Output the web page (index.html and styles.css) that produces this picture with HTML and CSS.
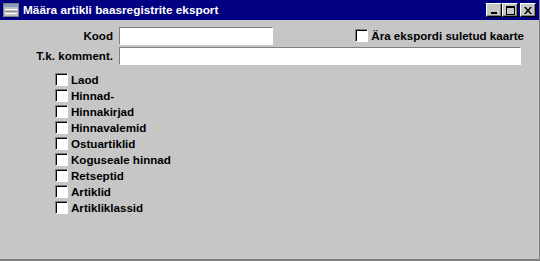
FILE: index.html
```html
<!DOCTYPE html>
<html>
<head>
<meta charset="utf-8">
<link rel="stylesheet" href="styles.css">
</head>
<body>
<div class="window">
  <div class="titlebar">
    <svg class="appicon" width="16" height="14" viewBox="0 0 16 14">
      <rect x="0.5" y="0.5" width="15" height="13" fill="#c0c0c0" stroke="#808080"/>
      <rect x="1" y="1" width="14" height="3" fill="#8a9ac8"/>
      <line x1="2" y1="6.5" x2="14" y2="6.5" stroke="#ffffff"/>
      <line x1="2" y1="8.5" x2="14" y2="8.5" stroke="#909090"/>
      <line x1="2" y1="10.5" x2="14" y2="10.5" stroke="#ffffff"/>
    </svg>
    <span class="title">Määra artikli baasregistrite eksport</span>
    <div class="tbuttons">
      <div class="tbtn"><svg width="8" height="7" viewBox="0 0 8 7"><rect x="1" y="5" width="6" height="2" fill="#000"/></svg></div>
      <div class="tbtn"><svg width="9" height="9" viewBox="0 0 9 9"><rect x="0.5" y="0.5" width="8" height="8" fill="none" stroke="#000"/><rect x="0" y="0" width="9" height="2" fill="#000"/></svg></div>
      <div class="tbtn close"><svg width="8" height="7" viewBox="0 0 8 7"><path d="M0 0h2l2 2.5 2-2.5h2L5 3.5 8 7H6L4 4.5 2 7H0l3-3.5z" fill="#000"/></svg></div>
    </div>
  </div>
  <div class="content">
    <div class="row row1">
      <label class="lbl">Kood</label>
      <div class="edit short"></div>
      <div class="check topcheck"><span class="box"></span><span>Ära ekspordi suletud kaarte</span></div>
    </div>
    <div class="row row2">
      <label class="lbl">T.k. komment.</label>
      <div class="edit long"></div>
    </div>
    <div class="list">
      <div class="check"><span class="box"></span><span>Laod</span></div>
      <div class="check"><span class="box"></span><span>Hinnad-</span></div>
      <div class="check"><span class="box"></span><span>Hinnakirjad</span></div>
      <div class="check"><span class="box"></span><span>Hinnavalemid</span></div>
      <div class="check"><span class="box"></span><span>Ostuartiklid</span></div>
      <div class="check"><span class="box"></span><span>Koguseale hinnad</span></div>
      <div class="check"><span class="box"></span><span>Retseptid</span></div>
      <div class="check"><span class="box"></span><span>Artiklid</span></div>
      <div class="check"><span class="box"></span><span>Artikliklassid</span></div>
    </div>
  </div>
</div>
</body>
</html>
```
FILE: styles.css
```css
* { box-sizing: border-box; }
html, body { margin: 0; padding: 0; background: #c6c6c6; }
body {
  font-family: "Liberation Sans", Arial, sans-serif;
  font-weight: bold;
  font-size: 11.6px;
  color: #000;
}
.window {
  width: 540px;
  height: 261px;
  background: #c6c6c6;
  border-right: 1px solid #808080;
  border-bottom: 2px solid #808080;
  display: flex;
  flex-direction: column;
}
.titlebar {
  height: 20px;
  background: #000080;
  display: flex;
  align-items: center;
  padding: 0 3px 0 3px;
  flex: none;
}
.appicon { flex: none; margin-right: 4px; }
.title {
  color: #fff;
  font-size: 11.8px;
  font-weight: bold;
}
.tbuttons {
  margin-left: auto;
  display: flex;
  align-items: center;
}
.tbtn {
  width: 16px;
  height: 14px;
  background: #c6c6c6;
  border-top: 1px solid #fff;
  border-left: 1px solid #fff;
  border-right: 1px solid #000;
  border-bottom: 1px solid #000;
  box-shadow: inset -1px -1px 0 #808080;
  display: flex;
  align-items: center;
  justify-content: center;
}
.tbtn.close { margin-left: 2px; }
.content {
  padding: 6px 13px 0 0;
  display: flex;
  flex-direction: column;
}
.row {
  display: flex;
  align-items: center;
  height: 19px;
}
.row1 { padding-right: 2px; }
.row2 { margin-top: 1px; }
.lbl {
  width: 114px;
  text-align: right;
  padding-right: 1px;
  margin-right: 5px;
}
.edit {
  height: 18px;
  background: #fff;
  border-top: 1px solid #808080;
  border-left: 1px solid #808080;
  border-right: 1px solid #fff;
  border-bottom: 1px solid #fff;
}
.edit.short { width: 154px; }
.edit.long { width: 402px; }
.check {
  display: flex;
  align-items: center;
  height: 16px;
}
.box {
  width: 13px;
  height: 13px;
  background: #fff;
  border-top: 1px solid #808080;
  border-left: 1px solid #808080;
  border-right: 1px solid #fff;
  border-bottom: 1px solid #fff;
  box-shadow: inset 1px 1px 0 #000;
  margin-right: 3px;
  flex: none;
}
.topcheck { margin-left: auto; }
.list {
  padding-left: 55px;
  margin-top: 6px;
  display: flex;
  flex-direction: column;
}
```
